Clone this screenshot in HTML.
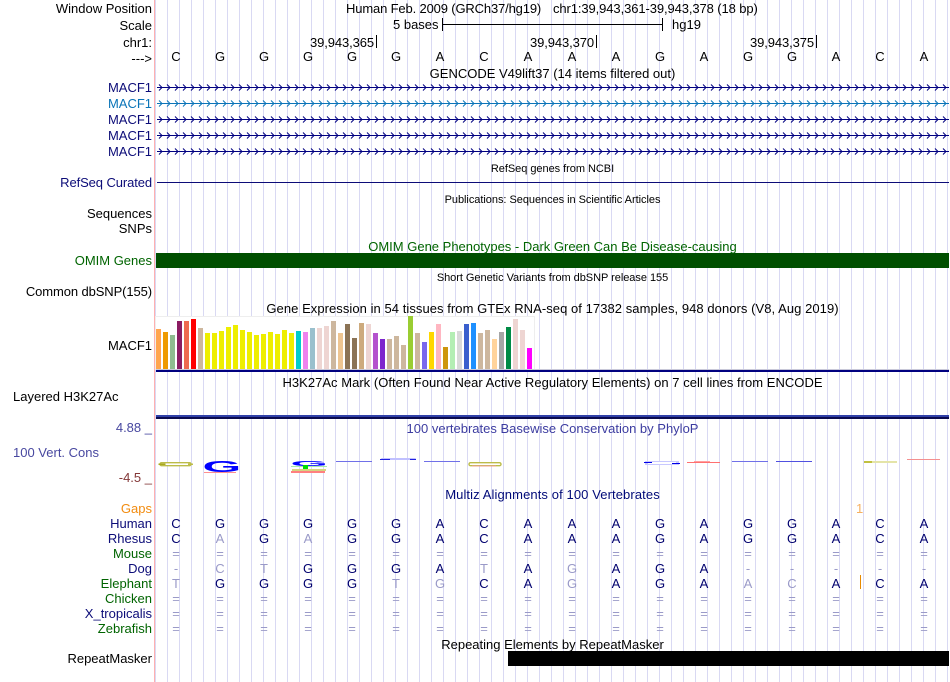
<!DOCTYPE html>
<html><head><meta charset="utf-8"><style>
html,body{margin:0;padding:0;background:#fff}
#p{position:relative;width:950px;height:682px;overflow:hidden;background:#fff;font:13px/14px "Liberation Sans",sans-serif;color:#000}
#s{position:absolute;left:0;top:0}
.t{position:absolute;white-space:pre}
.l{position:absolute;right:798px;white-space:pre;text-align:right}
.c{position:absolute;left:155px;width:795px;text-align:center;white-space:pre}
.m{font-size:11px;letter-spacing:-.04px}
.r{position:absolute;left:154px;width:792px;display:flex;color:#00006e}
.r i{font-style:normal;width:44px;text-align:center;display:block}
.r b{font-weight:normal;width:44px;text-align:center;display:block;color:#9a9ac8}
.n{color:#0c0c78}.g{color:#006400}
</style></head><body><div id="p">
<svg id="s" width="950" height="682">
<defs>
<pattern id="v" x="167" y="0" width="12" height="682" patternUnits="userSpaceOnUse"><rect width="1" height="682" fill="#d9d9f3"/></pattern>
<pattern id="a1" x="157" y="0" width="8" height="16" patternUnits="userSpaceOnUse"><path d="M2 0.5L5 3.5L2 6.5" fill="none" stroke="#000080" stroke-width="1"/></pattern>
<pattern id="a2" x="157" y="0" width="8" height="16" patternUnits="userSpaceOnUse"><path d="M2 0.5L5 3.5L2 6.5" fill="none" stroke="#0a74b8" stroke-width="1"/></pattern>
</defs>
<rect x="155" width="795" height="682" fill="url(#v)"/>
<rect x="154" width="1" height="682" fill="#ffb0b0"/>
<!-- ruler -->
<rect x="442" y="24" width="221" height="1" fill="#000"/><rect x="442" y="18" width="1" height="13" fill="#000"/><rect x="662" y="18" width="1" height="13" fill="#000"/>
<rect x="376" y="35" width="1" height="13" fill="#000"/><rect x="596" y="35" width="1" height="13" fill="#000"/><rect x="816" y="35" width="1" height="13" fill="#000"/>
<!-- genes -->
<g transform="translate(0,84)"><rect x="157" width="792" height="7" fill="url(#a1)"/><rect x="157" y="3" width="792" height="1" fill="#000080"/></g>
<g transform="translate(0,100)"><rect x="157" width="792" height="7" fill="url(#a2)"/><rect x="157" y="3" width="792" height="1" fill="#0a74b8"/></g>
<g transform="translate(0,116)"><rect x="157" width="792" height="7" fill="url(#a1)"/><rect x="157" y="3" width="792" height="1" fill="#000080"/></g>
<g transform="translate(0,132)"><rect x="157" width="792" height="7" fill="url(#a1)"/><rect x="157" y="3" width="792" height="1" fill="#000080"/></g>
<g transform="translate(0,148)"><rect x="157" width="792" height="7" fill="url(#a1)"/><rect x="157" y="3" width="792" height="1" fill="#000080"/></g>
<rect x="157" y="182" width="792" height="1" fill="#0c0c78"/>
<rect x="156" y="253" width="793" height="15" fill="#004f00"/>
<!-- GTEx -->
<rect x="155.5" y="316.5" width="379" height="53" fill="#fff" stroke="#eeeeee"/>
<g>
<rect x="156" y="329" width="5" height="40" fill="#FFA54F"/><rect x="163" y="332" width="5" height="37" fill="#EE9A00"/><rect x="170" y="335" width="5" height="34" fill="#8FBC8F"/><rect x="177" y="321" width="5" height="48" fill="#8B1C62"/><rect x="184" y="321" width="5" height="48" fill="#EE6A50"/><rect x="191" y="319" width="5" height="50" fill="#FF0000"/><rect x="198" y="328" width="5" height="41" fill="#CDB79E"/>
<rect x="205" y="333" width="5" height="36" fill="#EEEE00"/><rect x="212" y="333" width="5" height="36" fill="#EEEE00"/><rect x="219" y="331" width="5" height="38" fill="#EEEE00"/><rect x="226" y="327" width="5" height="42" fill="#EEEE00"/><rect x="233" y="325" width="5" height="44" fill="#EEEE00"/><rect x="240" y="330" width="5" height="39" fill="#EEEE00"/><rect x="247" y="332" width="5" height="37" fill="#EEEE00"/><rect x="254" y="335" width="5" height="34" fill="#EEEE00"/><rect x="261" y="334" width="5" height="35" fill="#EEEE00"/><rect x="268" y="332" width="5" height="37" fill="#EEEE00"/><rect x="275" y="334" width="5" height="35" fill="#EEEE00"/><rect x="282" y="330" width="5" height="39" fill="#EEEE00"/><rect x="289" y="333" width="5" height="36" fill="#EEEE00"/>
<rect x="296" y="331" width="5" height="38" fill="#00CDCD"/><rect x="303" y="332" width="5" height="37" fill="#EE82EE"/><rect x="310" y="328" width="5" height="41" fill="#9AC0CD"/><rect x="317" y="328" width="5" height="41" fill="#EED5D2"/><rect x="324" y="326" width="5" height="43" fill="#EED5D2"/><rect x="331" y="321" width="5" height="48" fill="#CDB79E"/><rect x="338" y="333" width="5" height="36" fill="#EEC591"/><rect x="345" y="324" width="5" height="45" fill="#8B7355"/>
<rect x="352" y="338" width="5" height="31" fill="#8B7355"/><rect x="359" y="323" width="5" height="46" fill="#CDAA7D"/><rect x="366" y="324" width="5" height="45" fill="#EED5D2"/><rect x="373" y="333" width="5" height="36" fill="#B452CD"/><rect x="380" y="339" width="5" height="30" fill="#7D26CD"/><rect x="387" y="339" width="5" height="30" fill="#CDB79E"/><rect x="394" y="336" width="5" height="33" fill="#CDB79E"/><rect x="401" y="345" width="5" height="24" fill="#CDB79E"/><rect x="408" y="316" width="5" height="53" fill="#9ACD32"/><rect x="415" y="333" width="5" height="36" fill="#CDB79E"/><rect x="422" y="342" width="5" height="27" fill="#7A67EE"/><rect x="429" y="332" width="5" height="37" fill="#FFD700"/><rect x="436" y="324" width="5" height="45" fill="#FFB6C1"/><rect x="443" y="347" width="5" height="22" fill="#CD950C"/><rect x="450" y="332" width="5" height="37" fill="#B4EEB4"/><rect x="457" y="331" width="5" height="38" fill="#D9D9D9"/><rect x="464" y="324" width="5" height="45" fill="#3A5FCD"/><rect x="471" y="323" width="5" height="46" fill="#1E90FF"/><rect x="478" y="333" width="5" height="36" fill="#CDB79E"/><rect x="485" y="330" width="5" height="39" fill="#CDB79E"/><rect x="492" y="339" width="5" height="30" fill="#FFD39B"/><rect x="499" y="332" width="5" height="37" fill="#A6A6A6"/><rect x="506" y="327" width="5" height="42" fill="#008B45"/><rect x="513" y="319" width="5" height="50" fill="#EED5D2"/><rect x="520" y="330" width="5" height="39" fill="#EED5D2"/><rect x="527" y="348" width="5" height="21" fill="#FF00FF"/>
</g>
<rect x="156" y="369" width="793" height="1" fill="#c8c8d8"/>
<rect x="156" y="370" width="793" height="2" fill="#000080"/>
<!-- H3K27Ac -->
<rect x="156" y="415" width="793" height="2" fill="#3040a8"/>
<rect x="156" y="417" width="793" height="2" fill="#0a0a50"/>
<!-- logo -->
<g>
<rect x="160" y="462.7" width="31" height="3" rx="1.5" fill="#fff" stroke="#bcbc48" stroke-width="1.4"/>
<rect x="158.5" y="463.5" width="7" height="1.5" fill="#a8a820"/><rect x="188" y="463.5" width="5" height="1.5" fill="#bcbc48"/>
<text transform="translate(202.5,472) scale(4.15,1.32)" font-family="Liberation Sans" font-weight="bold" font-size="12" fill="#0000ff">G</text>
<rect x="204" y="472" width="32" height="1" fill="#ff9090"/>
<text transform="translate(290.5,466) scale(4,0.6)" font-family="Liberation Sans" font-weight="bold" font-size="12" fill="#0000ff">G</text>
<rect x="291" y="466" width="36" height="1" fill="#a8eca8"/><rect x="303" y="465" width="5" height="4" fill="#00e000"/>
<rect x="292" y="469" width="34" height="2" fill="#d4d480"/><rect x="291" y="471" width="34" height="2" fill="#ff8080"/>
<rect x="336" y="461" width="36" height="1" fill="#7070e8"/>
<rect x="381" y="458" width="35" height="2" rx="1" fill="#c0c0ff"/><rect x="380" y="459" width="10" height="1" fill="#2020e0"/><rect x="410" y="459" width="6" height="1" fill="#2020e0"/>
<rect x="424" y="461" width="36" height="1" fill="#7070e8"/>
<rect x="469" y="462.7" width="32" height="3" rx="1.5" fill="#fff" stroke="#bcbc48" stroke-width="1.4"/><rect x="472" y="465.5" width="24" height="1" fill="#f0a090"/>
<rect x="645" y="461" width="34" height="4" fill="#c8c8ff"/><rect x="648" y="462" width="28" height="2" fill="#fff"/><rect x="644" y="462" width="8" height="1" fill="#0000e8"/><rect x="672" y="463" width="8" height="1" fill="#0000e8"/>
<rect x="687" y="462" width="33" height="1" fill="#ff7070"/><rect x="694" y="461" width="16" height="1" fill="#ffa0a0"/>
<rect x="732" y="461" width="36" height="1" fill="#7070e8"/>
<rect x="776" y="461" width="36" height="1" fill="#5050e0"/>
<rect x="864" y="461" width="33" height="2" fill="#e4e4a8"/><rect x="864" y="461" width="8" height="2" fill="#c0c040"/>
<rect x="907" y="459" width="33" height="1" fill="#f49090"/>
</g>
<rect x="860" y="575" width="1" height="14" fill="#e88a00"/>
<rect x="508" y="651" width="441" height="15" fill="#000"/>
</svg>

<div class="l" style="top:2px">Window Position</div>
<div class="l" style="top:19px">Scale</div>
<div class="l" style="top:36px">chr1:</div>
<div class="l" style="top:52px">---&gt;</div>
<div class="t" style="left:346px;top:2px;letter-spacing:-.15px">Human Feb. 2009 (GRCh37/hg19)</div>
<div class="t" style="left:553px;top:2px;letter-spacing:-.1px">chr1:39,943,361-39,943,378 (18 bp)</div>
<div class="t" style="left:393px;top:18px">5 bases</div>
<div class="t" style="left:672px;top:18px">hg19</div>
<div class="t" style="left:310px;top:36px;letter-spacing:-.1px">39,943,365</div>
<div class="t" style="left:530px;top:36px;letter-spacing:-.1px">39,943,370</div>
<div class="t" style="left:750px;top:36px;letter-spacing:-.1px">39,943,375</div>
<div class="r" style="top:50px;color:#000"><i>C</i><i>G</i><i>G</i><i>G</i><i>G</i><i>G</i><i>A</i><i>C</i><i>A</i><i>A</i><i>A</i><i>G</i><i>A</i><i>G</i><i>G</i><i>A</i><i>C</i><i>A</i></div>
<div class="c" style="top:67px">GENCODE V49lift37 (14 items filtered out)</div>

<div class="l n" style="top:81px">MACF1</div>
<div class="l" style="top:97px;color:#0a74b8">MACF1</div>
<div class="l n" style="top:113px">MACF1</div>
<div class="l n" style="top:129px">MACF1</div>
<div class="l n" style="top:145px">MACF1</div>

<div class="c m" style="top:162px">RefSeq genes from NCBI</div>
<div class="l n" style="top:176px;letter-spacing:-.1px">RefSeq Curated</div>
<div class="c m" style="top:193px">Publications: Sequences in Scientific Articles</div>
<div class="l" style="top:207px">Sequences</div>
<div class="l" style="top:222px">SNPs</div>
<div class="c g" style="top:240px">OMIM Gene Phenotypes - Dark Green Can Be Disease-causing</div>
<div class="l g" style="top:254px">OMIM Genes</div>
<div class="c m" style="top:271px">Short Genetic Variants from dbSNP release 155</div>
<div class="l" style="top:285px;letter-spacing:-.1px">Common dbSNP(155)</div>
<div class="c" style="top:302px;letter-spacing:.055px">Gene Expression in 54 tissues from GTEx RNA-seq of 17382 samples, 948 donors (V8, Aug 2019)</div>
<div class="l" style="top:339px">MACF1</div>
<div class="c" style="top:376px;letter-spacing:.03px">H3K27Ac Mark (Often Found Near Active Regulatory Elements) on 7 cell lines from ENCODE</div>
<div class="t" style="left:13px;top:390px">Layered H3K27Ac</div>
<div class="l" style="top:421px;color:#4848a0">4.88 _</div>
<div class="c" style="top:422px;color:#3c3ca0">100 vertebrates Basewise Conservation by PhyloP</div>
<div class="t" style="left:13px;top:446px;color:#4848a0">100 Vert. Cons</div>
<div class="l" style="top:471px;color:#843838">-4.5 _</div>
<div class="c" style="top:488px;color:#000a78;letter-spacing:.1px">Multiz Alignments of 100 Vertebrates</div>

<div class="l" style="top:502px;color:#f28c10">Gaps</div>
<div class="t" style="left:856px;top:502px;color:#f6b060">1</div>
<div class="l n" style="top:517px">Human</div>
<div class="r" style="top:517px"><i>C</i><i>G</i><i>G</i><i>G</i><i>G</i><i>G</i><i>A</i><i>C</i><i>A</i><i>A</i><i>A</i><i>G</i><i>A</i><i>G</i><i>G</i><i>A</i><i>C</i><i>A</i></div>
<div class="l n" style="top:532px">Rhesus</div>
<div class="r" style="top:532px"><i>C</i><b>A</b><i>G</i><b>A</b><i>G</i><i>G</i><i>A</i><i>C</i><i>A</i><i>A</i><i>A</i><i>G</i><i>A</i><i>G</i><i>G</i><i>A</i><i>C</i><i>A</i></div>
<div class="l g" style="top:547px">Mouse</div>
<div class="r" style="top:547px"><b>=</b><b>=</b><b>=</b><b>=</b><b>=</b><b>=</b><b>=</b><b>=</b><b>=</b><b>=</b><b>=</b><b>=</b><b>=</b><b>=</b><b>=</b><b>=</b><b>=</b><b>=</b></div>
<div class="l n" style="top:562px">Dog</div>
<div class="r" style="top:562px"><b>-</b><b>C</b><b>T</b><i>G</i><i>G</i><i>G</i><i>A</i><b>T</b><i>A</i><b>G</b><i>A</i><i>G</i><i>A</i><b>-</b><b>-</b><b>-</b><b>-</b><b>-</b></div>
<div class="l g" style="top:577px">Elephant</div>
<div class="r" style="top:577px"><b>T</b><i>G</i><i>G</i><i>G</i><i>G</i><b>T</b><b>G</b><i>C</i><i>A</i><b>G</b><i>A</i><i>G</i><i>A</i><b>A</b><b>C</b><i>A</i><i>C</i><i>A</i></div>
<div class="l g" style="top:592px">Chicken</div>
<div class="r" style="top:592px"><b>=</b><b>=</b><b>=</b><b>=</b><b>=</b><b>=</b><b>=</b><b>=</b><b>=</b><b>=</b><b>=</b><b>=</b><b>=</b><b>=</b><b>=</b><b>=</b><b>=</b><b>=</b></div>
<div class="l n" style="top:607px">X_tropicalis</div>
<div class="r" style="top:607px"><b>=</b><b>=</b><b>=</b><b>=</b><b>=</b><b>=</b><b>=</b><b>=</b><b>=</b><b>=</b><b>=</b><b>=</b><b>=</b><b>=</b><b>=</b><b>=</b><b>=</b><b>=</b></div>
<div class="l g" style="top:622px">Zebrafish</div>
<div class="r" style="top:622px"><b>=</b><b>=</b><b>=</b><b>=</b><b>=</b><b>=</b><b>=</b><b>=</b><b>=</b><b>=</b><b>=</b><b>=</b><b>=</b><b>=</b><b>=</b><b>=</b><b>=</b><b>=</b></div>
<div class="c" style="top:638px">Repeating Elements by RepeatMasker</div>
<div class="l" style="top:652px">RepeatMasker</div>
</div></body></html>
